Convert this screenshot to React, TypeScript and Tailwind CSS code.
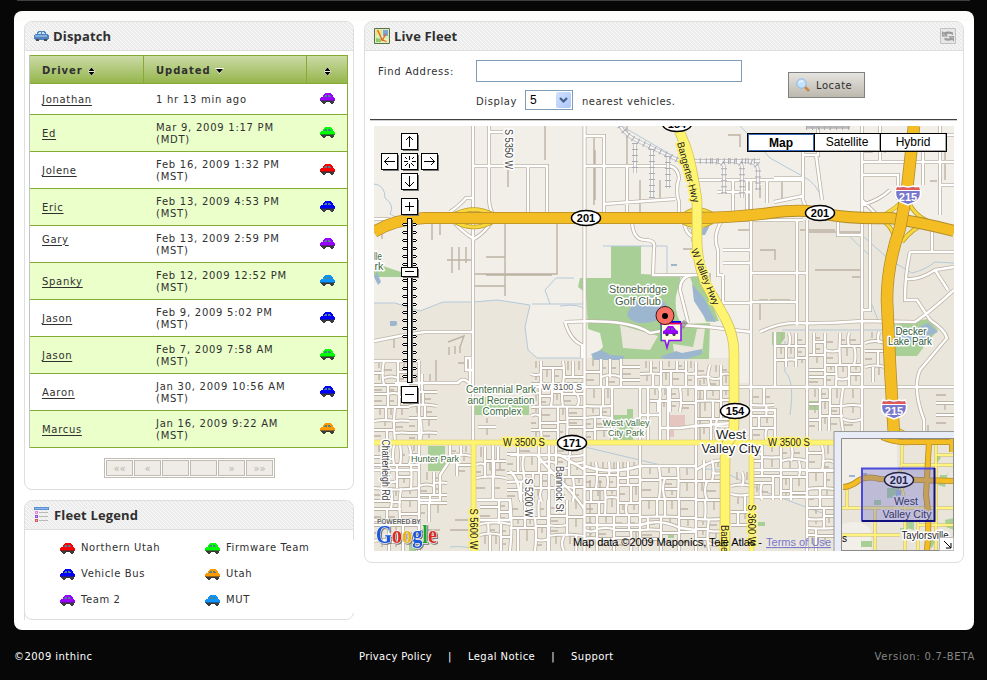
import React from "react";

type CarProps = { color: string };

function Car({ color }: CarProps) {
  return (
    <svg width="15" height="11" viewBox="0 0 15 11" shapeRendering="crispEdges" className="block shrink-0">
      <path d="M5 0h6v1h1v1h1v2h1v1h1v3H0V5h1V4h2V2h1V1h1z" fill={color} />
      <path d="M5 2h2v2H4V3h1zM8 2h2v1h1v1H8z" fill="#4a8290" />
      <path d="M0 7h15v1H0z" fill="#333" opacity=".55" />
      <path d="M2 8h4v2H5v1H3v-1H2zM10 8h4v2h-1v1h-2v-1h-1z" fill="#3c3c3c" />
      <path d="M1 8h1v1H1zM6 8h4v1H6z" fill="#333" />
    </svg>
  );
}

const PURPLE = "#9900ff";
const GREEN = "#00ff00";
const RED = "#ff0000";
const BLUE = "#0000ff";
const AZURE = "#0a94ff";
const ORANGE = "#ff9900";

const drivers: [string, string, string, string][] = [
  ["Jonathan", "1 hr 13 min ago", "", PURPLE],
  ["Ed", "Mar 9, 2009 1:17 PM", "(MDT)", GREEN],
  ["Jolene", "Feb 16, 2009 1:32 PM", "(MST)", RED],
  ["Eric", "Feb 13, 2009 4:53 PM", "(MST)", BLUE],
  ["Gary", "Feb 13, 2009 2:59 PM", "(MST)", PURPLE],
  ["Spanky", "Feb 12, 2009 12:52 PM", "(MST)", AZURE],
  ["Jason", "Feb 9, 2009 5:02 PM", "(MST)", BLUE],
  ["Jason", "Feb 7, 2009 7:58 AM", "(MST)", GREEN],
  ["Aaron", "Jan 30, 2009 10:56 AM", "(MST)", BLUE],
  ["Marcus", "Jan 16, 2009 9:22 AM", "(MST)", ORANGE],
];

const legend: [string, string][] = [
  ["Northern Utah", RED],
  ["Firmware Team", GREEN],
  ["Vehicle Bus", BLUE],
  ["Utah", ORANGE],
  ["Team 2", PURPLE],
  ["MUT", AZURE],
];

function PanelHeader({ icon, title, children }: { icon: React.ReactNode; title: string; children?: React.ReactNode }) {
  return (
    <div className="flex h-[29px] shrink-0 items-center rounded-t-[7px] border-b border-[#dedede] bg-[linear-gradient(45deg,#fafafa_12.5%,#ececec_12.5%,#ececec_50%,#fafafa_50%,#fafafa_62.5%,#ececec_62.5%)] bg-[length:4px_4px] pr-[7px] pl-[9px]">
      {icon}
      <h2 className="ml-1 flex-1 font-['Open_Sans',sans-serif] text-[13px] font-bold tracking-[0.15px] text-[#303030]">{title}</h2>
      {children}
    </div>
  );
}

function DispatchIcon() {
  return (
    <svg width="15" height="11" viewBox="0 0 15 11" shapeRendering="crispEdges">
      <path d="M4 0h7v1h1v2h2v1h1v4h-1v1H1V8H0V4h1V3h2V1h1z" fill="#5182bd" />
      <path d="M5 1h2v2H4V2h1zM8 1h2v1h1v1H8z" fill="#c3e2f7" />
      <path d="M1 4h12v2H1z" fill="#82b0df" />
      <path d="M2 8h3v2H2zM10 8h3v2h-3z" fill="#4b4b4b" />
    </svg>
  );
}

function LegendIcon() {
  return (
    <svg width="16" height="16" viewBox="0 0 16 16" shapeRendering="crispEdges">
      <path d="M0 0h15v3H0z" fill="#5c91d3" />
      <path d="M1 1h13v1H1z" fill="#8db7e8" />
      <path d="M1 4h3v3H1z" fill="#e78be0" />
      <path d="M1 8h3v3H1z" fill="#8b55d8" />
      <path d="M1 12h3v3H1z" fill="#e05757" />
      <path d="M2 5h1v1H2zM2 9h1v1H2zM2 13h1v1H2z" fill="#fff" opacity=".5" />
      <path d="M5 5h9v1H5zM5 9h9v1H5zM5 13h9v1H5z" fill="#b9b9b9" />
    </svg>
  );
}

function FleetIcon() {
  return (
    <svg width="16" height="16" viewBox="0 0 16 16">
      <path d="M.5.5h15v15H.5z" fill="#d9efb0" stroke="#5c6d50" />
      <path d="M2 2h6v5H2z" fill="#f1e07c" />
      <path d="M9 2h5v6H9z" fill="#78a7de" />
      <path d="M2 10l5 1v3H2z" fill="#8fc968" />
      <path d="M9 10l5 1v3H9z" fill="#f2efb0" />
      <path d="M3.500 2l2 4 3 7M12 5.500l-3.500 6.500 4 1.500" stroke="#e65d2c" strokeWidth="1.300" fill="none" />
    </svg>
  );
}

function RefreshIcon() {
  return (
    <svg width="16" height="16" viewBox="0 0 16 16">
      <path d="M.5.5h15v15H.5z" fill="#e6e6e6" stroke="#c2c2c2" />
      <path d="M2 3l1.800 1.500Q8 2.500 13 4.500V7Q9 5 6.500 6.500L8 8.500H2z" fill="#999" />
      <path d="M14 13.500l-1.800-1.500Q8 13.500 4.500 12V9.500Q8 11 10 10L8.500 8H14z" fill="#9d9d9d" />
      <path d="M3 6l2 1.500M11 8.500l2 2" stroke="#ddd" strokeWidth=".8" />
    </svg>
  );
}

function SortArrows() {
  return (
    <svg width="7" height="9" viewBox="0 0 7 9" className="block">
      <path d="M3.500 0.500L6.500 4h-6zM3.500 8.500l3-3.500h-6z" fill="#000" stroke="#fff" strokeWidth="1" paintOrder="stroke" />
    </svg>
  );
}

function Dispatch() {
  return (
    <section className="flex h-[469px] flex-col rounded-lg border border-[#dedede] bg-white">
      <PanelHeader icon={<DispatchIcon />} title="Dispatch" />
      <div className="mt-1 mr-[5px] ml-1 border-r border-l border-r-[#84ac31] border-l-[#c2c2c2]">
        <div className="flex h-[29px] border-y border-[#84ac31] bg-linear-to-b from-[#cbdba5] to-[#96b54a] font-bold tracking-[0.95px] text-[#303030]">
          <div className="flex w-[114px] items-center gap-[5px] border-r border-[#84ac31] pt-[3px] pl-3">
            Driver <SortArrows />
          </div>
          <div className="flex w-[163px] items-center gap-1 border-r border-[#84ac31] pt-[3px] pl-3">
            Updated
            <svg width="9" height="6" viewBox="0 0 9 6">
              <path d="M0 0h9L4.500 6z" fill="#fff" />
              <path d="M1 1h7L4.500 5z" />
            </svg>
          </div>
          <div className="flex flex-1 items-center justify-center pt-[3px]">
            <SortArrows />
          </div>
        </div>
        {drivers.map(([name, date, zone, color], i) => (
          <div
            key={i}
            className={`flex items-center border-b border-[#84ac31] ${i === 0 ? "h-[31px]" : "h-[37px]"} ${i % 2 ? "bg-[#eaffca]" : "bg-white"}`}
          >
            <div className={`w-[126px] pl-3 tracking-[0.7px] ${name === "Gary" ? "pb-[9px]" : "pt-[2px]"}`}>
              <a className="underline decoration-1 underline-offset-2">{name}</a>
            </div>
            <div className="w-[151px] pt-[2px] leading-3 tracking-[0.74px] whitespace-nowrap">
              <div>{date}</div>
              {zone && <div>{zone}</div>}
            </div>
            <div className="flex flex-1 justify-center pb-[2px]">
              <Car color={color} />
            </div>
          </div>
        ))}
      </div>
      <div className="mt-[10px] ml-[79px] flex h-5 w-[171px] gap-px border border-[#c0bcb4] bg-white p-px text-[#b7b3ab]">
        {["««", "«", "", "", "»", "»»"].map((s, i) => (
          <div key={i} className="flex flex-1 items-center justify-center border border-[#c0bcb4] bg-[#efece7] pt-px text-[10px] tracking-normal">
            {s}
          </div>
        ))}
      </div>
    </section>
  );
}

function FleetLegend() {
  return (
    <section className="relative flex h-[120px] flex-col rounded-lg border border-[#dedede] bg-white">
      <PanelHeader icon={<LegendIcon />} title="Fleet Legend" />
      <div className="mt-[5px] ml-[35px] grid grid-cols-[145px_1fr] grid-rows-[26px_26px_26px] tracking-[0.6px]">
        {legend.map(([label, color]) => (
          <div key={label} className="flex items-center gap-[6px]">
            <Car color={color} />
            {label}
          </div>
        ))}
      </div>
      <span className="absolute top-[39px] -right-px h-[73px] w-px bg-white" />
      <span className="absolute -bottom-px -left-px h-2 w-px bg-[#dedede]" />
    </section>
  );
}

/* Residential streets: each district is split into ever smaller blocks. */
function districtStreets(x: number, y: number, w: number, h: number, seed: number) {
  let s = seed * 7919;
  const rnd = () => {
    s = (s * 16807) % 2147483647;
    return s / 2147483647;
  };
  const roads: string[] = [];
  const stubs: string[] = [];
  const split = (a: number, b: number, c: number, d: number, depth: number) => {
    if (depth === 0 || (c < 20 && d < 20) || c * d < 200) {
      const m = Math.round(a + c * 0.5);
      if (c > 8 && d > 8) {
        stubs.push(rnd() > 0.5 ? `M${m} ${b}v${Math.round(d * 0.55)}` : `M${a} ${Math.round(b + d / 2)}h${Math.round(c * 0.55)}`);
      }
      return;
    }
    const k = 0.28 + rnd() * 0.44;
    if (c > d * (0.7 + rnd() * 0.5)) {
      const m = Math.round(a + c * k);
      const bend = rnd() > 0.6 ? Math.round(rnd() * 8 - 4) : 0;
      roads.push(`M${m} ${b}q${bend} ${d / 2} 0 ${d}`);
      split(a, b, m - a, d, depth - 1);
      split(m, b, a + c - m, d, depth - 1);
    } else {
      const m = Math.round(b + d * k);
      const bend = rnd() > 0.6 ? Math.round(rnd() * 8 - 4) : 0;
      roads.push(`M${a} ${m}q${c / 2} ${bend} ${c} 0`);
      split(a, b, c, m - b, depth - 1);
      split(a, m, c, b + d - m, depth - 1);
    }
  };
  split(x, y, w, h, 6);
  return { roads: roads.join(""), stubs: stubs.join("") };
}

const districts = [
  [374, 361, 35, 80, 11],
  [409, 374, 28, 68, 23],
  [374, 445, 45, 106, 37],
  [419, 472, 28, 50, 71],
  [449, 446, 22, 30, 83],
  [478, 418, 18, 24, 19],
  [476, 447, 30, 50, 61],
  [480, 500, 104, 51, 97],
  [507, 446, 77, 56, 29],
  [531, 361, 54, 81, 113],
  [585, 359, 55, 28, 127],
  [585, 388, 27, 55, 131],
  [640, 361, 56, 26, 149],
  [650, 388, 46, 24, 151],
  [697, 365, 34, 75, 163],
  [585, 462, 55, 89, 173],
  [641, 467, 55, 84, 181],
  [697, 460, 26, 91, 191],
  [731, 472, 20, 60, 197],
  [752, 388, 22, 54, 211],
  [775, 333, 32, 34, 223],
  [809, 333, 53, 53, 227],
  [809, 388, 53, 43, 239],
  [865, 332, 20, 50, 241],
  [752, 445, 55, 55, 251],
  [807, 445, 27, 106, 263],
  [936, 387, 18, 44, 271],
].map(([x, y, w, h, s]) => districtStreets(x, y, w, h, s));

const mainStreets =
  "M473 126V443M489 126V200Q490 214 497 218M473 166H547V212M528 166V212M489 132H503" +
  "M584.500 126V551M640 387V551M696 362V551M751 180V443M807 220V551M797 220V325M862 126V431" +
  "M530 387H954M686 180H803M585 166H670Q678 168 679 178Q675 190 679 202V218M585 136H604V212M627 166V212M604 204L675 199" +
  "M760 332Q780 322 800 323T862 321L915 322Q930 312 954 290M752 273H807M752 302H797" +
  "M632 222Q633 240 645 240Q656 240 654 248L653 275H705M684 222Q686 238 700 238M722 220Q712 236 718 250V275H723M723 250H751M723 263H751M723 275V303M723 303H751M717 192H751V220M733 180V218M747 180V218" +
  "M374 341L405 335L425 332H473M395 383H458Q463 376 470 384V358H466V370H473M374 361H420M419 361V551M374 219H390" +
  "M494 218Q486 232 474 239Q462 232 450 218M450 212Q460 205 466 198H473M697 230L685 225M697 230L712 222" +
  "M565 322Q600 320 620 323T650 333Q670 330 680 325L708 327L751 332M688 322L680 290Q680 275 695 275M565 322Q570 340 582 345V358" +
  "M803 150V200Q806 210 815 214M803 155H818V126M816 155L822 200M803 178H774M774 202L803 196M716 220H803M767 180V203" +
  "M862 135H954M862 162H954M862 175H898V200M940 126V215M940 185H954M880 126V162M923 135V185M862 200L880 218M862 235H838V222M862 205Q880 200 890 190" +
  "M910 252H954M910 252Q905 275 905 300H917L930 320Q945 330 947 338L920 370Q912 388 924 420V431M907 279Q920 280 935 270L954 267M935 270L948 290M932 220V252M870 222V310H862" +
  "M477 500H510V520H480M493 445V500M585 466Q610 475 640 466M640 466H696M752 470H834M752 497H834M585 470L560 455H510M696 470Q715 458 725 461M660 388V440M668 388V440M612 387V440M648 388V440M660 428H680Q700 425 734 423M640 415H660M585 525H640Q660 518 680 528L696 530M751 387V410H775V442M775 387V332" +
  "M510 471Q520 480 520 500M537 455Q545 465 560 480T585 510M549 443V551M374 470H419M419 500H440V475L450 460V445M374 520H419";

const backStreets =
  "M545 126V160M508 170V187M505 222V296M557 223V274H475M486 275H552M474 286H505M486 257H505M447 260H475M452 247V273M459 247V270M466 247V263M440 222V235M432 220V240M595 150V200M594 136V205M627 126V200M660 180V202M640 180V217M728 135H740V147M760 185V198M782 180V202M872 140V152H862M885 140V153M945 140V180M930 181H937M815 270H862M852 277H862M835 230H800M808 232H862M775 260V250H760M770 300H790M862 220V250M448 342L464 336L460 347M449 347V355M455 346V354M460 346V353M458 363H473M436 360V382M382 230V239M394 338V348M760 320V300H768M928 425V432M710 273V283M683 249H697M692 228V242M738 230H751M590 480V540M600 480V510M490 470H505M485 462H503M455 520H468M450 530H468M420 530H440M700 380V440M830 130V126";

const canals =
  "M374 303H395L420 311L443 302H473L497 300L530 305L525 327L528 350L537 358H584M550 304L545 290L556 278H574M532 304H584M374 184Q385 185 385 198Q395 205 390 214L401 220M740 126Q755 140 770 158L804 177Q817 183 822 200M858 232L890 260L912 273Q925 270 935 262L954 263M560 306Q580 303 585 310M585 447L665 466L720 470L760 490L830 516M785 341V372Q795 380 790 415M450 547Q465 545 480 551M603 246H667V275M845 232L870 256V300L878 320M782 330H885M620 125L680 160";

const spur = "M620 126Q626 136 640 142L680 161H760";
const spurSidings = "M635 143V173M652 149V198M668 156V188M710 161Q724 161 724 167V194M728 161Q742 161 742 167V198M745 161Q758 162 758 170V190";

function Oval({ x, y, n }: { x: number; y: number; n: string }) {
  return (
    <g>
      <ellipse cx={x} cy={y} rx="14.500" ry="7.500" fill="#fff" stroke="#000" strokeWidth="1.500" />
      <text x={x} y={y + 4} textAnchor="middle" fontSize="11" fontWeight="bold" fill="#000">
        {n}
      </text>
    </g>
  );
}

function Interstate({ x, y }: { x: number; y: number }) {
  return (
    <g transform={`translate(${x} ${y})`}>
      <path d="M-11-9q3 1.500 6 0q5 2 10 0q3 1.500 6 0q5 13-6 17l-5 2-5-2q-11-4-6-17z" fill="#7777cc" stroke="#fff" strokeWidth="1.500" />
      <path d="M-11-8q3 1.500 6 0q5 2 10 0q3 1.500 6 0l1 3h-24z" fill="#e45b55" />
      <path d="M-12.500-4.500h25" stroke="#fff" />
      <text y="5.500" textAnchor="middle" fontSize="11" fontWeight="bold" fill="#fff">
        215
      </text>
    </g>
  );
}

type LabelProps = { x: number; y: number; w: number; size?: number; fill?: string; halo?: string; turn?: number; children: string };

function Label({ x, y, w, size = 10.5, fill = "#222", halo = "#fff", turn = 0, children }: LabelProps) {
  return (
    <text
      x={0}
      y={0}
      transform={`translate(${x} ${y}) rotate(${turn})`}
      textAnchor="middle"
      fontSize={size}
      textLength={w}
      lengthAdjust="spacingAndGlyphs"
      fill={fill}
      stroke={halo}
      strokeWidth="3"
      strokeLinejoin="round"
      paintOrder="stroke"
    >
      {children}
    </text>
  );
}

function Knob({ x, y, d, h = 16 }: { x: number; y: number; d: string; h?: number }) {
  return (
    <g transform={`translate(${x} ${y})`} shapeRendering="crispEdges">
      <path d={`M2 ${h + 1.5}H${17.5}V2`} stroke="#777" fill="none" />
      <rect x=".5" y=".5" width="16" height={h} fill="#fff" stroke="#000" />
      <path d={d} stroke="#000" fill="none" />
    </g>
  );
}

function InsetMap() {
  const yellow =
    "M847 485V508M841 508H954M902 445V462L899 478L905 500V551M875 508V551M918 508V551M936 445V551M841 535H900M902 465H954M936 455H954M918 525H954";
  const orange =
    "M882 437Q895 443 910 442H954M843 487Q850 487 858 481T880 479L920 480L954 481M929 442L927 478L926 495Q930 520 927 551M952 438V452";
  return (
    <g>
      <path d="M834 431h120v120H834z" fill="#e8ecf7" />
      <path d="M834 551V431.500H954" stroke="#999" fill="none" />
      <svg x="841" y="438" width="113" height="113" viewBox="841 438 113 113">
        <path d="M841 438h113v113H841z" fill="#e9e5db" />
        <path d="M841 438h56v32l-10 8h-25l-21 10zM841 525q20-8 30 5v21h-30z" fill="#f2efe9" />
        <path d="M940 475h8v-3l-3 15-7-2zM887 488h12v10h-12zM874 500h7v5h-7zM905 518l9 4v8l-7-2zM861 541h11v6h-11zM928 538l7 3-3 7-5-3zM945 520l9-2v12l-8-3zM900 528h8v5h-8zM936 452l5 6-5 6z" fill="#a8cf96" />
        <path d="M849 475h6v2h-6zM862 473h5v2h-5zM896 490h5v6h-5z" fill="#9db6d0" />
        <path d={yellow} stroke="#cdbb4b" strokeWidth="3" fill="none" />
        <path d={yellow} stroke="#fff382" strokeWidth="1.800" fill="none" />
        <path d={orange} stroke="#b18c28" strokeWidth="6" fill="none" />
        <path d={orange} stroke="#f3bd23" strokeWidth="4.500" fill="none" />
        <Label x={925} y={539} w={47} size={10}>
          Taylorsville
        </Label>
        <text x="842" y="542" fontSize="10">
          s
        </text>
        <Oval x={899} y={480} n="201" />
        <Label x={906} y={505} w={24} size={11} halo="#eeeaf0">
          West
        </Label>
        <Label x={907} y={518} w={49} size={11} halo="#eeeaf0">
          Valley City
        </Label>
        <path d="M862 468h73v53h-73z" fill="#6666cc" fillOpacity=".33" />
        <path d="M862 521.500V468.500H935" stroke="#4a4add" strokeWidth="2" fill="none" />
        <path d="M862 521H934.500V468" stroke="#101080" strokeWidth="2" fill="none" />
        <path d="M841.500 551V438.500H953.500V550.500H841" stroke="#8b8b8b" fill="none" />
      </svg>
      <path d="M939.500 537.500h14v13h-14z" fill="#fff" stroke="#bbb" />
      <path d="M944 541l7 7M951 543v5h-5" stroke="#000" fill="none" />
    </g>
  );
}

const ticks = Array.from({ length: 20 }, (_, i) => 224 + i * 8);
const hwy201 = "M374 232Q395 219 425 218H690Q735 218 770 213T825 214Q850 219 890 218Q920 222 954 231";
const bangerter = "M675 120Q679 130 685 145T697 200V240Q697 262 706 284L725 318Q734 335 734 353V425Q733 438 728 442Q725 446 725 460V551";
const i215 = "M914 126L907 190L900 228Q887 265 887 300L890 365L894 435";
const ramps =
  "M455 214Q474 205 492 214M455 222Q474 232 492 222M685 214Q697 205 712 214M683 222Q697 230 712 222M880 217Q898 208 907 196Q911 215 932 223M880 219Q893 226 895 240M926 224Q912 228 902 242M898 430L910 436";
const yellowStreets = "M374 442.500H840M473.500 442V551M751.500 448V551";

function FleetMap() {
  return (
    <svg
      width="580"
      height="425"
      viewBox="374 126 580 425"
      className="block font-['Liberation_Sans',Arial,sans-serif] tracking-normal"
    >
      <path d="M374 126h580v425H374z" fill="#f2efe9" />
      <path d="M374 303H395L420 311L443 302H473L497 300L530 305L525 327L528 350L537 358H738V383H751V220H803L862 222L954 230V551H374z" fill="#eae6dc" />
      <g fill="#a8cf96">
        <path d="M611 246h30v28l40 2-5 20q-2 18 6 28l28-1-1 36H591l12-12-3-14-12-4-2-36-8-6 2-9h31zM690 277l10-1 19 45-13 1-8-22z" />
        <path d="M475 397h54v18h-54zM428 446h17v25h-17zM613 415h14v-6h6v31h-20zM893 325l35-6 10 11-12 14-9 12H895zM374 263l30 10h10v4h-40zM772 332h13v6l-5 7h-8zM809 401h13v9h-13zM758 522h7v4h-7zM668 533h6v5h-6zM409 543h7v8h-7z" />
      </g>
      <path d="M620 325l38 11-8 14-27-2zM673 344l20 3 4-18 8-1-3 25h-28z" fill="#eae6dc" />
      <path d="M633 303q10-10 25-5 12 5 10 16-12 10-30 9-10-3-11-9zM692 284l12 14 12 24-9-1-13-20zM591 354l10-4 10 5 14 1-3 4h-28zM660 357l16-6 6 2 20-4v5l-15 5h-22zM671 264h6v2h-6zM703 227l7-2-5 10h-5zM895 326l20 3 13-6 10 9-14 6-4 7-12-4-10 5zM374 277l3-5 4 10-3 3zM390 321h6q3 3-1 5h-5z" fill="#9db6d0" />
      <path d="M668 415h17v12h-11v10h-6z" fill="#e6c5c0" />
      <path d={canals} fill="none" stroke="#b5c9d9" strokeWidth="1" />
      <g fill="none" stroke="#bdb3a4">
        {districts.map((d, i) => (
          <path key={i} d={d.stubs} strokeWidth="1.300" />
        ))}
        <path d={backStreets} strokeWidth="1.400" />
        {districts.map((d, i) => (
          <path key={i} d={d.roads} strokeWidth="3.800" />
        ))}
        <path d={mainStreets} strokeWidth="4" />
      </g>
      <g fill="none" stroke="#fff">
        {districts.map((d, i) => (
          <path key={i} d={d.roads} strokeWidth="2.200" />
        ))}
        <path d={mainStreets} strokeWidth="2.400" />
      </g>
      <g fill="none">
        <path d={spur + spurSidings + "M806 127H850"} stroke="#b9b9b9" strokeWidth="3.500" />
        <path d={spur + spurSidings} stroke="#f6f6f6" strokeWidth="2" />
        <path d={spur + spurSidings + "M806 127H850"} stroke="#aaaab2" strokeWidth="6" strokeDasharray="1 5" />
      </g>
      <g fill="none">
        <path d={ramps} stroke="#bb9c27" strokeWidth="4.500" />
        <path d={ramps} stroke="#f7d83d" strokeWidth="3" />
        <path d={yellowStreets} stroke="#d6c96b" strokeWidth="5.500" />
        <path d={yellowStreets} stroke="#fff470" strokeWidth="4.300" />
        <path d={hwy201} stroke="#b18c28" strokeWidth="12" />
        <path d={hwy201} stroke="#f3bd23" strokeWidth="10.300" />
        <path d={bangerter} stroke="#cfc05d" strokeWidth="10.500" />
        <path d={bangerter} stroke="#fff470" strokeWidth="9" />
        <path d={i215} stroke="#b18c28" strokeWidth="12.500" />
        <path d={i215} stroke="#f3bd23" strokeWidth="11" />
      </g>

      <Oval x={677} y={124} n="154" />
      <Oval x={586} y={218} n="201" />
      <Oval x={820} y={213} n="201" />
      <Oval x={735} y={411} n="154" />
      <Oval x={572} y={443} n="171" />
      <Interstate x={908} y={195} />
      <Interstate x={894} y={409} />

      <Label x={504.5} y={149} w={40} turn={90} size={10} fill="#444">S 5350 W</Label>
      <Label x={685} y={173} w={62} turn={75} size={10} halo="#fff470">Bangerter Hwy</Label>
      <Label x={702} y={278} w={60} turn={68} size={10} halo="#fff470">W Valley Hwy</Label>
      <Label x={638} y={293} w={58} fill="#456445">Stonebridge</Label>
      <Label x={638} y={305} w={46} fill="#456445">Golf Club</Label>
      <Label x={501} y={393} w={70} fill="#3d6b3d">Centennial Park</Label>
      <Label x={501} y={404} w={67} fill="#3d6b3d">and Recreation</Label>
      <Label x={502} y={415} w={39} fill="#3d6b3d">Complex</Label>
      <Label x={562} y={390} w={40} size={9.5} fill="#555">W 3100 S</Label>
      <Label x={435} y={462} w={48} size={9.5} fill="#3d6b3d">Hunter Park</Label>
      <Label x={626} y={426} w={47} size={9.5} fill="#3d6b3d">West Valley</Label>
      <Label x={626} y={436} w={36} size={9.5} fill="#3d6b3d">City Park</Label>
      <Label x={911} y={335} w={31} fill="#2f5a3c">Decker</Label>
      <Label x={910} y={345} w={44} fill="#2f5a3c">Lake Park</Label>
      <Label x={378} y={260} w={8} fill="#3d6b3d">lle</Label>
      <Label x={379} y={270} w={9} fill="#3d6b3d">rk</Label>
      <Label x={524} y={446} w={42} size={10} halo="#fff470">W 3500 S</Label>
      <Label x={789} y={446} w={42} size={10} halo="#fff470">W 3500 S</Label>
      <Label x={470} y={529} w={41} turn={90} size={10} halo="#fff470">S 5600 W</Label>
      <Label x={748} y={525} w={41} turn={90} size={10} halo="#fff470">S 3600 W</Label>
      <Label x={721} y={556} w={62} turn={90} size={10} halo="#fff470">Bangerter Hwy</Label>
      <Label x={382} y={470} w={61} turn={90} size={10} fill="#444">Chatterleigh Rd</Label>
      <Label x={525} y={498} w={39} turn={90} size={10} fill="#444">S 5200 W</Label>
      <Label x={556} y={489} w={46} turn={90} size={10} fill="#444">Bannock St</Label>
      <Label x={731} y={439} w={30} size={12}>West</Label>
      <Label x={731} y={453} w={59} size={12}>Valley City</Label>

      <path d="M680 323l4-3 4 3-5 6z" fill="#555" opacity=".5" />
      <path d="M661 321h20v19h-20z" fill="#0000ff" />
      <path d="M661 323.500h20v17h-12l-2 7-2-7h-4z" fill="#fffbe0" stroke="#8c16f0" strokeWidth="1.600" />
      <path d="M660.500 341V325" stroke="#00dd22" />
      <path d="M661 323.500h20" stroke="#ff0048" strokeWidth="1.500" />
      <svg x="663" y="326" width="15" height="11" viewBox="0 0 15 11">
        <path d="M5 0h5l3 4 2 1v3H0V5l2-1z" fill={PURPLE} />
        <path d="M5 2h2v2H4zM8 2h2l1 2H8z" fill="#6d5aa0" />
        <circle cx="4" cy="8.500" r="1.600" fill="#443055" />
        <circle cx="11" cy="8.500" r="1.600" fill="#443055" />
      </svg>
      <circle cx="665" cy="315.500" r="9" fill="#fa6f64" stroke="#401414" />
      <circle cx="665" cy="316" r="3" />

      <Knob x={401} y={133} d="M8.500 3v11M4.500 7.500l4-4 4 4" />
      <Knob x={381} y={153} d="M3 8.500h11M7.500 4.500l-4 4 4 4" />
      <Knob x={401} y={153} d="M8.500 2.500v4M8.500 10.500v4M2.500 8.500h4M10.500 8.500h4M4 4l2.500 2.500M13 4l-2.500 2.500M4 13l2.500-2.500M13 13l-2.500-2.500" />
      <Knob x={421} y={153} d="M3 8.500h11M9.500 4.500l4 4-4 4" />
      <Knob x={401} y={173} d="M8.500 3v11M4.500 9.500l4 4 4-4" />
      <Knob x={401} y={198} d="M8.500 4v9M4 8.500h9" />
      <g shapeRendering="crispEdges">
        {ticks.map((y) => (
          <g key={y}>
            <path d={`M403 ${y - 1}h13v1h1v1h-1v1h-13v-1h-1v-1h1z`} fill="#000" />
            <path d={`M403 ${y}h13v1h-13z`} fill="#fff" />
          </g>
        ))}
        <rect x="407.500" y="218.500" width="4" height="164" fill="#fff" stroke="#000" />
        <path d="M412.500 220v163" stroke="#555" />
      </g>
      <Knob x={401} y={267} d="M4 4.500h9" h={9} />
      <Knob x={401} y={386} d="M4 8.500h9" />

      <text x="377" y="524" fontSize="7" fontWeight="bold" textLength="44" fill="#666" stroke="#fff" strokeWidth="1" paintOrder="stroke">
        POWERED BY
      </text>
      <text
        x="376"
        y="543"
        textLength="61"
        lengthAdjust="spacingAndGlyphs"
        stroke="#f4f4f4"
        strokeWidth="1.500"
        paintOrder="stroke"
        fontSize="25"
        className="font-['Liberation_Serif',serif] font-bold drop-shadow-[1px_1px_0px_#777]"
      >
        <tspan fill="#1c58d9">G</tspan>
        <tspan fill="#d92b22">o</tspan>
        <tspan fill="#e9b217">o</tspan>
        <tspan fill="#1c58d9">g</tspan>
        <tspan fill="#1ca52e">l</tspan>
        <tspan fill="#d92b22">e</tspan>
      </text>
      <text x="573" y="546" fontSize="11" textLength="189" fill="#000">
        Map data ©2009 Maponics, Tele Atlas -
      </text>
      <text x="766" y="546" fontSize="11" textLength="65" fill="#7777cc" textDecoration="underline">
        Terms of Use
      </text>
      <InsetMap />
    </svg>
  );
}

function LiveFleet() {
  return (
    <section className="flex h-[542px] flex-col rounded-lg border border-[#dedede] bg-white">
      <PanelHeader icon={<FleetIcon />} title="Live Fleet">
        <RefreshIcon />
      </PanelHeader>
      <div className="mr-[6px] ml-[5px] flex h-[69px] border-b border-[#404040] pl-2 shadow-[0_1px_0_#cfcfcf]">
        <div className="w-[98px] pt-[15px] tracking-[0.7px]">Find Address:</div>
        <div className="w-[266px] pt-[9px]">
          <div className="h-[22px] border border-[#7f9db9] bg-white" />
          <div className="mt-2 flex h-5 items-center">
            <span className="w-[49px] pt-1 tracking-[0.6px]">Display</span>
            <span className="flex h-5 w-12 items-center justify-between border border-[#7f9db9] pr-px pl-1 font-['Liberation_Sans',Arial,sans-serif] text-xs tracking-normal text-black">
              5
              <span className="flex h-4 w-[15px] items-center justify-center rounded-xs bg-linear-to-br from-[#d1e0ff] to-[#adc6f8]">
                <svg width="9" height="7" viewBox="0 0 9 7">
                  <path d="M1 1l3.500 3.500L8 1" fill="none" stroke="#455f86" strokeWidth="2.200" />
                </svg>
              </span>
            </span>
            <span className="ml-[9px] pt-1 tracking-[0.5px] whitespace-nowrap">nearest vehicles.</span>
          </div>
        </div>
        <button className="mt-[21px] ml-[46px] flex h-[26px] w-[77px] items-center border border-[#808080] bg-linear-to-b from-[#e6e4df] to-[#bcb8ae] pl-[7px]">
          <svg width="14" height="14" viewBox="0 0 14 14">
            <path d="M9 9l4 4" stroke="#c98646" strokeWidth="2.500" />
            <circle cx="5.500" cy="5.500" r="4.700" fill="#c4e3fb" stroke="#8bb6e8" />
            <path d="M3 5q1-2.500 4-2" stroke="#fff" fill="none" />
          </svg>
          <span className="mt-px ml-[6px] tracking-[0.5px]">Locate</span>
        </button>
      </div>
      <div className="mx-[9px] mt-[6px] h-[425px] shrink-0">
        <div className="relative w-[580px]">
          <FleetMap />
          <div className="absolute top-[7px] left-[373px] flex h-[19px] w-[200px] border border-black bg-black font-['Liberation_Sans',Arial,sans-serif] text-xs tracking-normal text-black">
            <div className="mr-px flex w-[66px] items-center justify-center border border-[#3b6cc0] bg-white font-bold">Map</div>
            <div className="mr-px flex w-[65px] items-center justify-center border-r border-b border-[#aaa] bg-white">Satellite</div>
            <div className="flex flex-1 items-center justify-center border-r border-b border-[#aaa] bg-white">Hybrid</div>
          </div>
        </div>
      </div>
    </section>
  );
}

export default function App() {
  return (
    <div className="flex h-[680px] w-[987px] flex-col bg-[#070707] font-['DejaVu_Sans',Verdana,sans-serif] text-[10px] leading-3 tracking-[0.75px] text-[#303030]">
      <div className="mr-[17px] ml-[17px] h-px bg-[#404040]" />
      <main className="mt-[10px] ml-[14px] flex h-[619px] w-[960px] gap-[10px] rounded-lg bg-[linear-gradient(#fcfcfa_10px,#fff_10px)] p-[10px]">
        <div className="flex w-[330px] flex-col gap-[10px]">
          <Dispatch />
          <FleetLegend />
        </div>
        <div className="w-[600px]">
          <LiveFleet />
        </div>
      </main>
      <footer className="mr-[12px] ml-[14px] mt-[21px] grid grid-cols-[345px_1fr_auto] tracking-[0.45px] text-white">
        <span>©2009 inthinc</span>
        <span className="flex gap-4">
          <span className="tracking-[0.35px]">Privacy Policy</span>
          <span>|</span>
          <span>Legal Notice</span>
          <span>|</span>
          <span>Support</span>
        </span>
        <span className="tracking-[0.75px] text-[#868686]">Version: 0.7-BETA</span>
      </footer>
    </div>
  );
}
